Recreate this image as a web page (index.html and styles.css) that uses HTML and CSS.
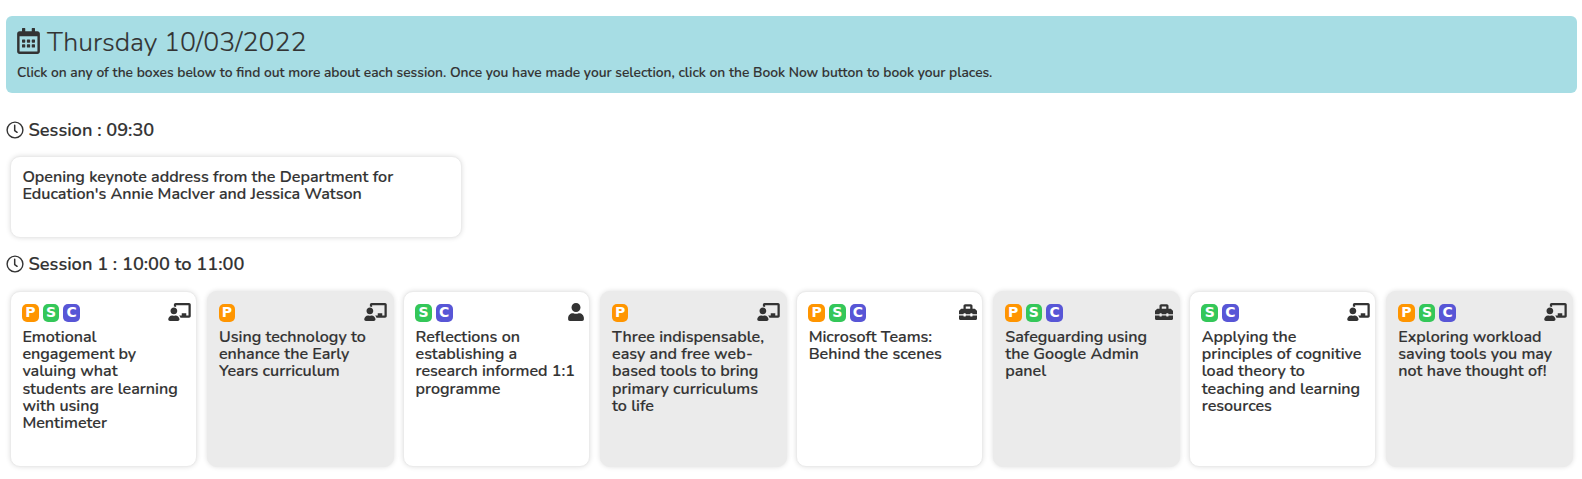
FILE: index.html
```html
<!DOCTYPE html>
<html lang="en">
<head>
    <meta charset="UTF-8">
    <meta name="viewport" content="width=device-width, initial-scale=1.0">
    <title>Sessions</title>
    <link rel="stylesheet" href="styles.css">
</head>
<body>
    <svg class="sprite" width="0" height="0">
        <symbol id="teacher" viewBox="0 0 640 512"><path d="M208 352c-2.39 0-4.78.35-7.06 1.09C187.98 357.3 174.35 360 160 360c-14.35 0-27.98-2.7-40.95-6.91-2.28-.74-4.66-1.09-7.05-1.09C49.94 352-.33 402.48 0 464.62.14 490.88 21.73 512 48 512h224c26.27 0 47.86-21.12 48-47.38.33-62.14-49.94-112.62-112-112.62zm-48-32c53.02 0 96-42.98 96-96s-42.98-96-96-96-96 42.98-96 96 42.98 96 96 96zM592 0H208c-26.47 0-48 22.25-48 49.59V96c23.42 0 45.1 6.78 64 17.8V64h352v288h-64v-64H384v64h-76.24c19.1 16.69 33.12 38.73 39.69 64H592c26.47 0 48-22.25 48-49.59V49.59C640 22.25 618.47 0 592 0z"/></symbol>
        <symbol id="user" viewBox="0 0 448 512"><path d="M224 256c70.7 0 128-57.3 128-128S294.7 0 224 0 96 57.3 96 128s57.3 128 128 128zm89.6 32h-16.7c-22.2 10.2-46.9 16-72.9 16s-50.6-5.8-72.9-16h-16.7C60.2 288 0 348.2 0 422.4V464c0 26.5 21.5 48 48 48h352c26.5 0 48-21.5 48-48v-41.6c0-74.2-60.2-134.4-134.4-134.4z"/></symbol>
        <symbol id="toolbox" viewBox="0 0 512 512"><path d="M502.63 214.63l-45.25-45.25c-6-6-14.14-9.37-22.63-9.37H384V80c0-26.51-21.49-48-48-48H176c-26.51 0-48 21.49-48 48v80H77.25c-8.49 0-16.62 3.37-22.63 9.37L9.37 214.63c-6 6-9.37 14.14-9.37 22.63V320h128v-16c0-8.84 7.16-16 16-16h32c8.84 0 16 7.16 16 16v16h128v-16c0-8.84 7.16-16 16-16h32c8.84 0 16 7.16 16 16v16h128v-82.75c0-8.48-3.37-16.62-9.37-22.62zM320 160H192V96h128v64zm64 208c0 8.84-7.16 16-16 16h-32c-8.84 0-16-7.16-16-16v-16H192v16c0 8.84-7.16 16-16 16h-32c-8.84 0-16-7.16-16-16v-16H0v96c0 17.67 14.33 32 32 32h448c17.67 0 32-14.33 32-32v-96H384v16z"/></symbol>
        <symbol id="clock" viewBox="0 0 18 18"><circle cx="9" cy="9" r="7.9" fill="none" stroke="#333" stroke-width="1.4"/><path d="M8.7 4.2v5.3l2.4 1.8" fill="none" stroke="#333" stroke-width="1.5" stroke-linecap="round"/></symbol>
    </svg>

    <div class="banner">
        <h1>
            <svg class="calendar" viewBox="0 0 448 512"><path d="M400 64h-48V12c0-6.6-5.4-12-12-12h-40c-6.6 0-12 5.4-12 12v52H160V12c0-6.6-5.4-12-12-12h-40c-6.6 0-12 5.4-12 12v52H48c-26.5 0-48 21.5-48 48v352c0 26.5 21.5 48 48 48h352c26.5 0 48-21.5 48-48V112c0-26.5-21.5-48-48-48zm-6 400H54c-3.3 0-6-2.7-6-6V160h352v298c0 3.3-2.7 6-6 6z"/><path d="M108 224h40q12 0 12 12v40q0 12-12 12h-40q-12 0-12-12v-40q0-12 12-12zm96 0h40q12 0 12 12v40q0 12-12 12h-40q-12 0-12-12v-40q0-12 12-12zm96 0h40q12 0 12 12v40q0 12-12 12h-40q-12 0-12-12v-40q0-12 12-12zM108 320h40q12 0 12 12v40q0 12-12 12h-40q-12 0-12-12v-40q0-12 12-12zm96 0h40q12 0 12 12v40q0 12-12 12h-40q-12 0-12-12v-40q0-12 12-12zm96 0h40q12 0 12 12v40q0 12-12 12h-40q-12 0-12-12v-40q0-12 12-12z"/></svg>
            <span>Thursday 10/03/2022</span>
        </h1>
        <p>Click on any of the boxes below to find out more about each session. Once you have made your selection, click on the Book Now button to book your places.</p>
    </div>

    <h2><svg><use href="#clock"/></svg><span>Session : 09:30</span></h2>
    <div class="row">
        <div class="card keynote">
            <p>Opening keynote address from the Department for<br>Education's Annie MacIver and Jessica Watson</p>
        </div>
    </div>

    <h2 class="second"><svg><use href="#clock"/></svg><span>Session 1 : 10:00 to 11:00</span></h2>
    <div class="row grid">
        <div class="card">
            <div class="tags"><b class="p">P</b><b class="s">S</b><b class="c">C</b><svg class="teacher"><use href="#teacher"/></svg></div>
            <p>Emotional<br>engagement by<br>valuing what<br>students are learning<br>with using<br>Mentimeter</p>
        </div>
        <div class="card grey">
            <div class="tags"><b class="p">P</b><svg class="teacher"><use href="#teacher"/></svg></div>
            <p>Using technology to<br>enhance the Early<br>Years curriculum</p>
        </div>
        <div class="card">
            <div class="tags"><b class="s">S</b><b class="c">C</b><svg class="user"><use href="#user"/></svg></div>
            <p>Reflections on<br>establishing a<br>research informed 1:1<br>programme</p>
        </div>
        <div class="card grey">
            <div class="tags"><b class="p">P</b><svg class="teacher"><use href="#teacher"/></svg></div>
            <p>Three indispensable,<br>easy and free web-<br>based tools to bring<br>primary curriculums<br>to life</p>
        </div>
        <div class="card">
            <div class="tags"><b class="p">P</b><b class="s">S</b><b class="c">C</b><svg class="toolbox"><use href="#toolbox"/></svg></div>
            <p>Microsoft Teams:<br>Behind the scenes</p>
        </div>
        <div class="card grey">
            <div class="tags"><b class="p">P</b><b class="s">S</b><b class="c">C</b><svg class="toolbox"><use href="#toolbox"/></svg></div>
            <p>Safeguarding using<br>the Google Admin<br>panel</p>
        </div>
        <div class="card">
            <div class="tags"><b class="s">S</b><b class="c">C</b><svg class="teacher"><use href="#teacher"/></svg></div>
            <p>Applying the<br>principles of cognitive<br>load theory to<br>teaching and learning<br>resources</p>
        </div>
        <div class="card grey">
            <div class="tags"><b class="p">P</b><b class="s">S</b><b class="c">C</b><svg class="teacher"><use href="#teacher"/></svg></div>
            <p>Exploring workload<br>saving tools you may<br>not have thought of!</p>
        </div>
    </div>
</body>
</html>
```
FILE: styles.css
```css
* { box-sizing: border-box; }
body { margin: 0; padding: 16px 5px 0 6px; height: 479px; overflow: hidden; background: #fff; color: #333; font-family: Nunito, Lato, sans-serif; }
h1, h2, p { margin: 0; }
svg { fill: #333; flex: none; }
.sprite { display: block; }

.banner { height: 77px; padding: 10px 11px; background: #a7dde4; border-radius: 6px; }
h1 { display: flex; align-items: center; gap: 7px; height: 32px; font-size: 26.7px; font-weight: 300; line-height: 32px; -webkit-text-stroke: 0.15px #333; }
h1 span { padding-bottom: 1px; }
.calendar { width: 23px; height: 26px; margin-top: -2px; }
.banner p { margin-top: 6px; font-size: 13.78px; font-weight: 600; line-height: 18px; white-space: nowrap; -webkit-text-stroke: 0.1px #333; }

h2 { display: flex; align-items: center; gap: 5px; height: 24px; margin-top: 25px; font-size: 18.2px; font-weight: 600; line-height: 24px; -webkit-text-stroke: 0.15px #333; }
h2 svg { width: 18px; height: 18px; margin: -1px 0 0 -0.5px; }
h2.second { margin-top: 14px; }

.row { margin-top: 14px; padding: 0 4px; }
.grid { display: grid; grid-template-columns: repeat(8, 1fr); gap: 9.5px; margin-top: 15px; }
.card { height: 176px; padding: 12px 5.5px 0 11.4px; background: #fff; border: 1px solid #ebebeb; border-radius: 10px; box-shadow: 0 0 5px rgba(0, 0, 0, 0.13); }
.card.grey { background: #ebebeb; }
.card p { font-size: 16.07px; font-weight: 600; line-height: 17.25px; white-space: nowrap; -webkit-text-stroke: 0.15px #333; }
.keynote { width: 452px; height: 82px; }

.tags { display: flex; gap: 4px; height: 18px; margin: 0 0 6.8px -0.4px; }
.tags b { width: 16.7px; height: 18px; border-radius: 5px; color: #fff; font: 700 15px/17px "DejaVu Sans", sans-serif; font-size: 14px; text-align: center; }
.tags svg { height: 18px; margin: -1px 0 0 auto; }
.p { background: #ff9500; }
.s { background: #34c759; }
.c { background: #5856d6; }
.teacher { width: 23px; }
.user { width: 16px; }
.toolbox { width: 18px; }
```
